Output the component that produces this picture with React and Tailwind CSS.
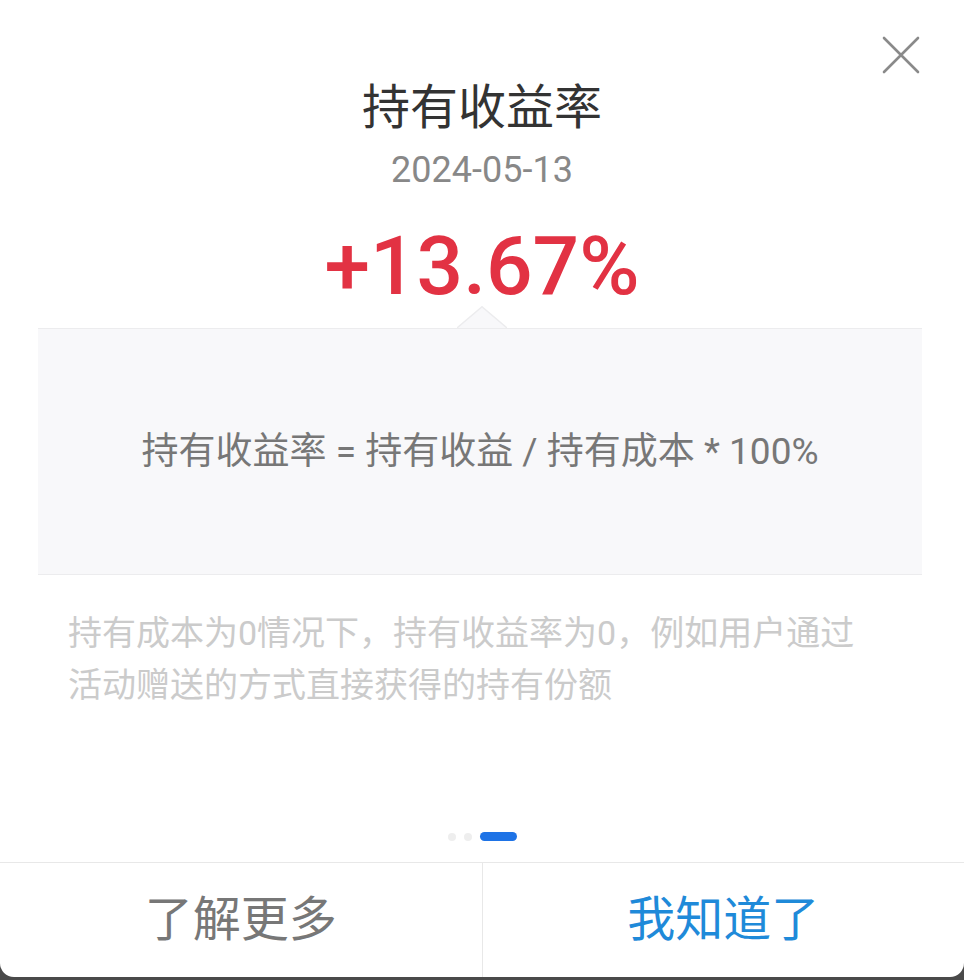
import React from 'react';

const font = { fontFamily: 'Roboto, "Noto Sans CJK SC", sans-serif' };

const CloseIcon = () => (
  <svg width="40" height="40" viewBox="0 0 40 40" fill="none">
    <path d="M3 3 L37 37 M37 3 L3 37" stroke="#8a8a8a" strokeWidth="2.6" strokeLinecap="round" />
  </svg>
);

const Notch = () => (
  <svg width="50" height="23" viewBox="0 0 50 23" className="block">
    <polygon points="0,22 25,0.8 50,22" fill="#f8f8fa" />
    <polyline points="0,22 25,0.8 50,22" fill="none" stroke="#ececee" strokeWidth="1.5" />
  </svg>
);

export default function App() {
  return (
    <div className="min-h-[980px] w-[964px] bg-[#4a4a4a]" style={font}>
      <div className="relative flex h-[977px] flex-col overflow-hidden rounded-b-[14px] bg-white">
        <button className="absolute right-[43px] top-[35px]">
          <CloseIcon />
        </button>

        <div className="flex flex-col items-center pt-[78px]">
          <h1 className="text-[48px] leading-[60px] text-[#333]">持有收益率</h1>
          <div className="mt-[10px] text-[36px] leading-[44px] text-[#888]">2024-05-13</div>
          <div className="mt-[29px] text-[82px] font-medium leading-[90px] text-[#e23243]">+13.67%</div>
        </div>

        <div className="ml-[38px] mr-[42px] mt-[-5px] flex flex-col">
          <div className="flex justify-center pl-[4px]">
            <Notch />
          </div>
          <div className="-mt-[1px] flex h-[247px] items-center justify-center border-y border-[#ececee] bg-[#f8f8fa]">
            <span className="text-[37px] text-[#777]">持有收益率 = 持有收益 / 持有成本 * 100%</span>
          </div>
        </div>

        <p className="mx-[68px] mt-[32px] text-[34px] leading-[52px] text-[#cbcbcb]">
          持有成本为0情况下，持有收益率为0，例如用户通过
          <br />
          活动赠送的方式直接获得的持有份额
        </p>

        <div className="mt-auto flex items-center justify-center gap-[8px] pb-[21px]">
          <span className="h-[8px] w-[8px] rounded-full bg-[#eeeeee]" />
          <span className="h-[8px] w-[8px] rounded-full bg-[#eeeeee]" />
          <span className="h-[9px] w-[37px] rounded-full bg-[#1e73e6]" />
        </div>

        <div className="flex h-[115px] border-t border-[#e8e8e8]">
          <button className="flex flex-1 items-center justify-center border-r border-[#e8e8e8] text-[48px] text-[#777]">
            了解更多
          </button>
          <button className="flex flex-1 items-center justify-center text-[48px] text-[#1f8ad9]">
            我知道了
          </button>
        </div>
      </div>
    </div>
  );
}
